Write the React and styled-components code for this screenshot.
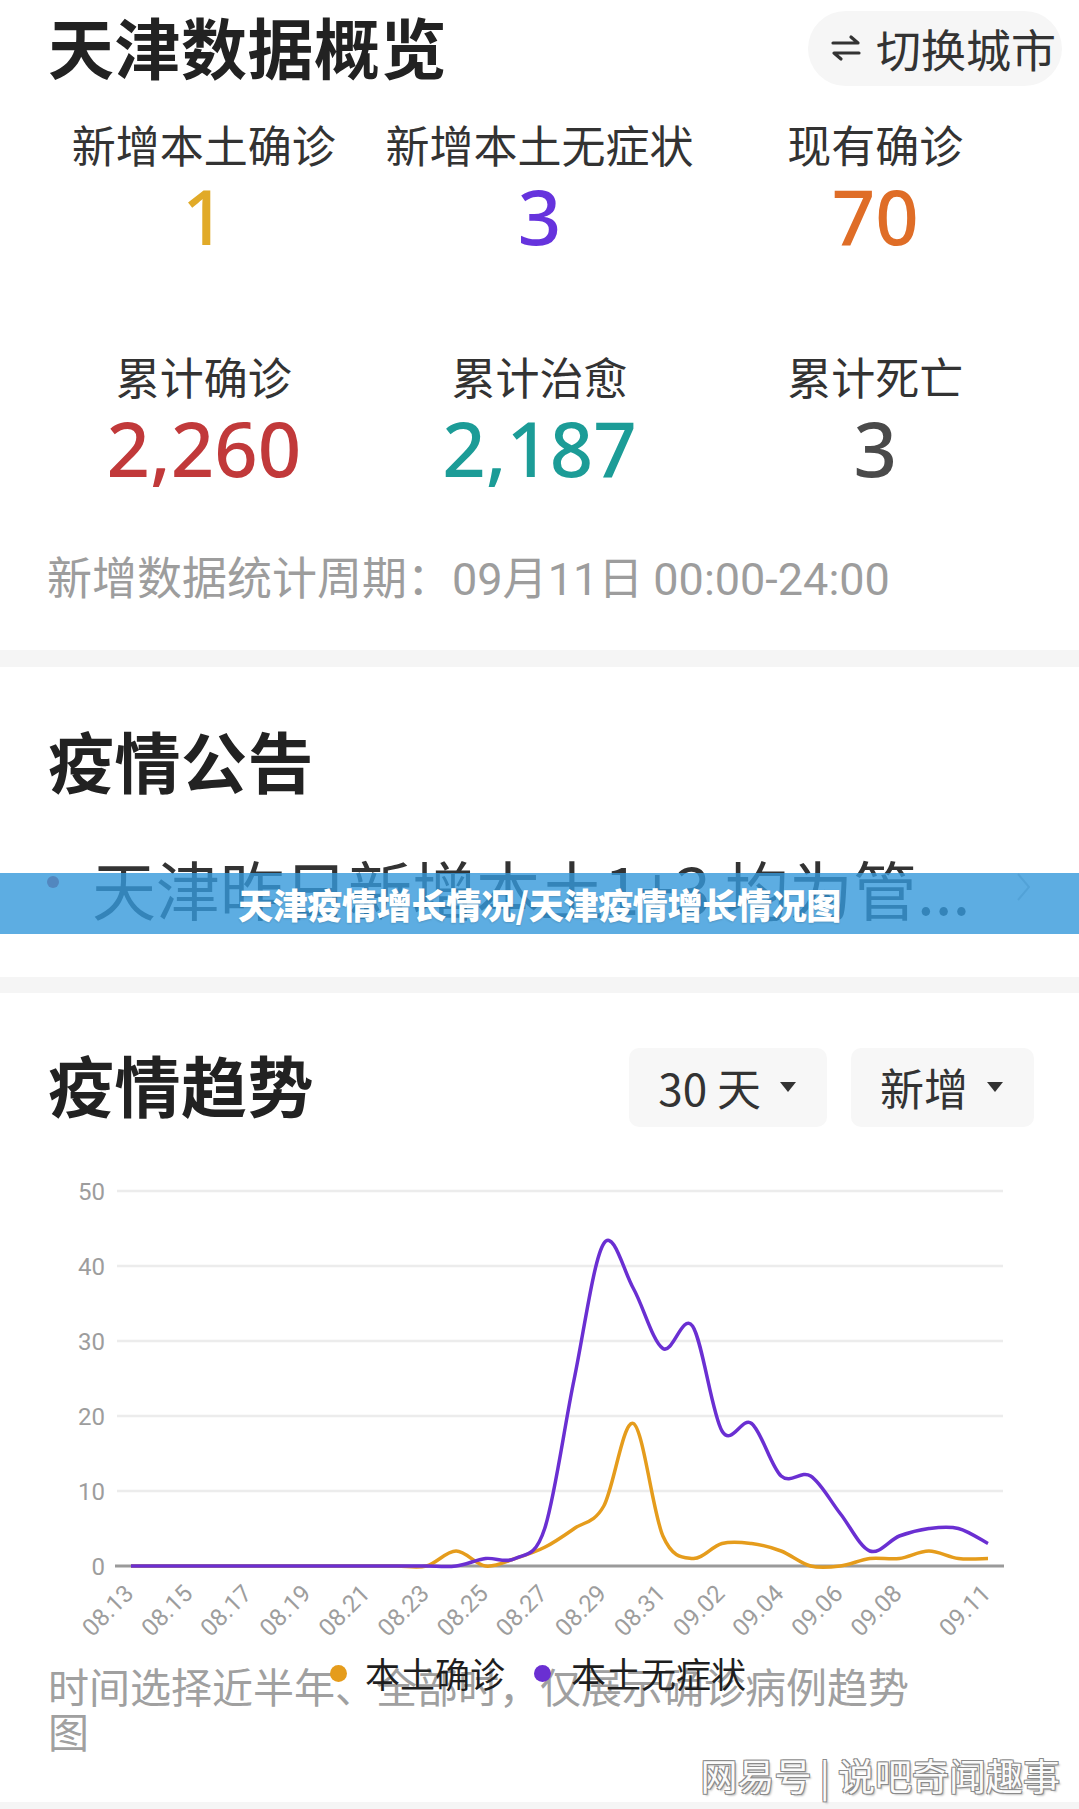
import React from "react"
import styled, { createGlobalStyle } from "styled-components"

const GlobalStyle = createGlobalStyle`
  html, body {
    margin: 0;
    padding: 0;
    background: #fff;
  }
  body {
    font-family: "Noto Sans CJK SC", "Noto Sans", sans-serif;
    color: #333;
  }
`

const Page = styled.div`
  width: 1079px;
  background: #fff;
  overflow: hidden;
`

const Section = styled.section`
  position: relative;
  background: #fff;
  padding: ${(p) => p.pad || "0"};
`

const Divider = styled.div`
  height: ${(p) => p.h || 17}px;
  background: #f5f5f5;
`

const HeaderRow = styled.div`
  display: flex;
  align-items: center;
  justify-content: space-between;
  height: ${(p) => p.h}px;
  padding: 0 ${(p) => p.right || 48}px 0 48px;
`

const Title = styled.h1`
  margin: 0 0 ${(p) => p.lift || 0}px;
  font-size: 66px;
  font-weight: 700;
  color: #222;
  line-height: ${(p) => p.lh || 90}px;
  letter-spacing: 0.5px;
`

const SwitchButton = styled.div`
  display: flex;
  align-items: center;
  gap: 14px;
  height: 75px;
  padding: 0 6px 0 22px;
  border-radius: 38px;
  background: #f6f6f6;
  font-size: 45px;
  color: #333;
`

const StatsGrid = styled.div`
  display: grid;
  grid-template-columns: repeat(3, 1fr);
  row-gap: 88px;
  margin-top: 20px;
  padding: 0 36px;
`

const StatCell = styled.div`
  display: flex;
  flex-direction: column;
  align-items: center;
`

const StatLabel = styled.div`
  font-size: 44px;
  line-height: 56px;
  height: 56px;
  color: #333;
`

const StatValue = styled.div`
  font-family: "Noto Sans", "Open Sans", sans-serif;
  font-size: 76px;
  font-weight: 500;
  line-height: 88px;
  height: 88px;
  color: ${(p) => p.color};
`

const PeriodText = styled.div`
  height: 56px;
  margin-top: 56px;
  padding-left: 47px;
  font-size: 45px;
  line-height: 56px;
  color: #9d9d9d;
  white-space: nowrap;
`

const PeriodNum = styled.span`
  font-family: Roboto, "Noto Sans", sans-serif;
  line-height: 1;
`

const NoticeRow = styled.div`
  display: flex;
  align-items: center;
  height: 70px;
  margin-top: 53px;
  padding: 0 47px 0 47px;
`

const Bullet = styled.span`
  width: 12px;
  height: 12px;
  border-radius: 50%;
  background: #c9414f;
  flex-shrink: 0;
  margin-right: 33px;
  margin-top: -10px;
`

const NoticeText = styled.div`
  flex: 1;
  font-size: 64px;
  line-height: 70px;
  color: #333;
  white-space: nowrap;
`

const Banner = styled.div`
  position: absolute;
  left: 0;
  right: 0;
  top: 206px;
  height: 61px;
  display: flex;
  align-items: center;
  justify-content: center;
  background: rgba(52, 152, 219, 0.8);
  color: #fff;
  font-size: 35px;
  font-weight: 900;
  letter-spacing: -0.3px;
  text-shadow: 0 1px 2px rgba(0, 0, 0, 0.15);
`

const DropGroup = styled.div`
  display: flex;
  gap: 24px;
`

const DropButton = styled.div`
  display: flex;
  align-items: center;
  gap: 19px;
  height: 79px;
  padding: 0 31px 0 29px;
  border-radius: 10px;
  background: #f7f7f7;
  font-size: 44px;
  color: #333;
`

const Caret = styled.span`
  width: 0;
  height: 0;
  border-left: 8px solid transparent;
  border-right: 8px solid transparent;
  border-top: 10px solid #333;
`

const ChartSvg = styled.svg`
  display: block;
  width: 1079px;
  height: 530px;
`

const FooterWrap = styled.div`
  position: relative;
  padding: 0 48px;
`

const Note = styled.p`
  margin: 0;
  max-width: 880px;
  font-size: 41px;
  line-height: 45px;
  color: #a0a0a0;
`

const Legend = styled.div`
  position: absolute;
  top: -12px;
  left: 330px;
  display: flex;
  align-items: center;
  font-size: 35px;
  line-height: 44px;
  color: #1e1e1e;
`

const LegendItem = styled.div`
  display: flex;
  align-items: center;
  gap: ${(p) => p.gap}px;
  margin-right: 29px;
`

const Dot = styled.span`
  width: 17px;
  height: 17px;
  border-radius: 50%;
  background: ${(p) => p.color};
`

const Watermark = styled.div`
  text-align: right;
  padding-right: 19px;
  font-size: 37px;
  line-height: 44px;
  color: #fbfbfb;
  text-shadow: -1px -1px 0 #8a8a8a, 1px -1px 0 #8a8a8a, -1px 1px 0 #8a8a8a,
    1px 1px 0 #8a8a8a, 2px 2px 2px rgba(0, 0, 0, 0.25);
`

const BottomStrip = styled.div`
  height: 20px;
  background: #f5f5f5;
`

const stats = [
  { label: "新增本土确诊", value: "1", color: "#e1aa28" },
  { label: "新增本土无症状", value: "3", color: "#6633dd" },
  { label: "现有确诊", value: "70", color: "#df6d27" },
  { label: "累计确诊", value: "2,260", color: "#c1393a" },
  { label: "累计治愈", value: "2,187", color: "#1c9c97" },
  { label: "累计死亡", value: "3", color: "#4a4a4a" },
]

const confirmed = [0, 0, 0, 0, 0, 0, 0, 0, 0, 0, 0, 2, 0, 1, 2.5, 5, 8, 19, 4, 1, 3, 3, 2, 0, 0, 1, 1, 2, 1, 1]
const asymptomatic = [0, 0, 0, 0, 0, 0, 0, 0, 0, 0, 0, 0, 1, 1, 5, 25, 43, 37, 29, 32, 18, 19, 12, 12, 7, 2, 4, 5, 5, 3]

const px = (i) => 131 + i * 29.55
const py = (v) => 433 - v * 7.5

function smoothPath(vals) {
  const pts = vals.map((v, i) => [px(i), py(v)])
  const f = (n) => n.toFixed(1)
  let d = `M${f(pts[0][0])},${f(pts[0][1])}`
  for (let i = 0; i < pts.length - 1; i++) {
    const p0 = pts[i - 1] || pts[i]
    const p1 = pts[i]
    const p2 = pts[i + 1]
    const p3 = pts[i + 2] || p2
    const c1x = p1[0] + (p2[0] - p0[0]) / 6
    const c1y = p1[1] + (p2[1] - p0[1]) / 6
    const c2x = p2[0] - (p3[0] - p1[0]) / 6
    const c2y = p2[1] - (p3[1] - p1[1]) / 6
    d += ` C${f(c1x)},${f(c1y)} ${f(c2x)},${f(c2y)} ${f(p2[0])},${f(p2[1])}`
  }
  return d
}

function dateLabel(i) {
  const day = 13 + i
  if (day <= 31) return `08.${String(day).padStart(2, "0")}`
  return `09.${String(day - 31).padStart(2, "0")}`
}

const tickIdx = [0, 2, 4, 6, 8, 10, 12, 14, 16, 18, 20, 22, 24, 26, 29]

function SwapIcon() {
  return (
    <svg width="32" height="28" viewBox="0 0 32 28" fill="none" stroke="#333" strokeWidth="3.2" strokeLinecap="round" strokeLinejoin="round">
      <path d="M3 9 H28 L21 3" />
      <path d="M29 19 H4 L11 25" />
    </svg>
  )
}

function Chevron() {
  return (
    <svg width="16" height="30" viewBox="0 0 16 30" fill="none" stroke="#c8c8c8" strokeWidth="2">
      <path d="M2 2 L13 15 L2 28" />
    </svg>
  )
}

function TrendChart() {
  return (
    <ChartSvg viewBox="0 0 1079 530">
      {[10, 20, 30, 40, 50].map((v) => (
        <line key={v} x1="117" x2="1003" y1={py(v)} y2={py(v)} stroke="#ececec" strokeWidth="2.5" />
      ))}
      <line x1="115" x2="1004" y1={py(0)} y2={py(0)} stroke="#9a9a9a" strokeWidth="3" />
      {[0, 10, 20, 30, 40, 50].map((v) => (
        <text key={v} x="105" y={py(v)} dy="0.36em" textAnchor="end" fontFamily="Roboto, sans-serif" fontSize="24" fill="#9d9d9d">
          {v}
        </text>
      ))}
      {tickIdx.map((i) => (
        <text
          key={i}
          x={px(i) + 4}
          y="462"
          textAnchor="end"
          transform={`rotate(-45 ${px(i) + 4} 462)`}
          fontFamily="Roboto, sans-serif"
          fontSize="24"
          fill="#9d9d9d"
        >
          {dateLabel(i)}
        </text>
      ))}
      <path d={smoothPath(confirmed)} fill="none" stroke="#e59c1c" strokeWidth="3.5" strokeLinejoin="round" />
      <path d={smoothPath(asymptomatic)} fill="none" stroke="#6a2fd2" strokeWidth="3.5" strokeLinejoin="round" />
    </ChartSvg>
  )
}

export default function App() {
  return (
    <Page>
      <GlobalStyle />
      <Section pad="0 0 46px">
        <HeaderRow h={96} right={17}>
          <Title lift={6}>天津数据概览</Title>
          <SwitchButton>
            <SwapIcon />
            <span>切换城市</span>
          </SwitchButton>
        </HeaderRow>
        <StatsGrid>
          {stats.map((s) => (
            <StatCell key={s.label}>
              <StatLabel>{s.label}</StatLabel>
              <StatValue color={s.color}>{s.value}</StatValue>
            </StatCell>
          ))}
        </StatsGrid>
        <PeriodText>
          新增数据统计周期：<PeriodNum>09</PeriodNum>月<PeriodNum>11</PeriodNum>日 <PeriodNum>00:00-24:00</PeriodNum>
        </PeriodText>
      </Section>
      <Divider h={17} />
      <Section pad="52px 0 55px">
        <HeaderRow h={80}>
          <Title lh={80}>疫情公告</Title>
        </HeaderRow>
        <NoticeRow>
          <Bullet />
          <NoticeText>天津昨日新增本土1+3 均为管...</NoticeText>
          <Chevron />
        </NoticeRow>
        <Banner>天津疫情增长情况/天津疫情增长情况图</Banner>
      </Section>
      <Divider h={16} />
      <Section pad="48px 0 5px">
        <HeaderRow h={92} right={45}>
          <Title lh={84} lift={8}>疫情趋势</Title>
          <DropGroup>
            <DropButton>
              <span>30 天</span>
              <Caret />
            </DropButton>
            <DropButton>
              <span>新增</span>
              <Caret />
            </DropButton>
          </DropGroup>
        </HeaderRow>
        <TrendChart />
        <FooterWrap>
          <Note>时间选择近半年、全部时，仅展示确诊病例趋势图</Note>
          <Legend>
            <LegendItem gap={18}>
              <Dot color="#e59c1c" />
              <span>本土确诊</span>
            </LegendItem>
            <LegendItem gap={20}>
              <Dot color="#6a2fd2" />
              <span>本土无症状</span>
            </LegendItem>
          </Legend>
        </FooterWrap>
        <Watermark>网易号 | 说吧奇闻趣事</Watermark>
      </Section>
      <BottomStrip />
    </Page>
  )
}
